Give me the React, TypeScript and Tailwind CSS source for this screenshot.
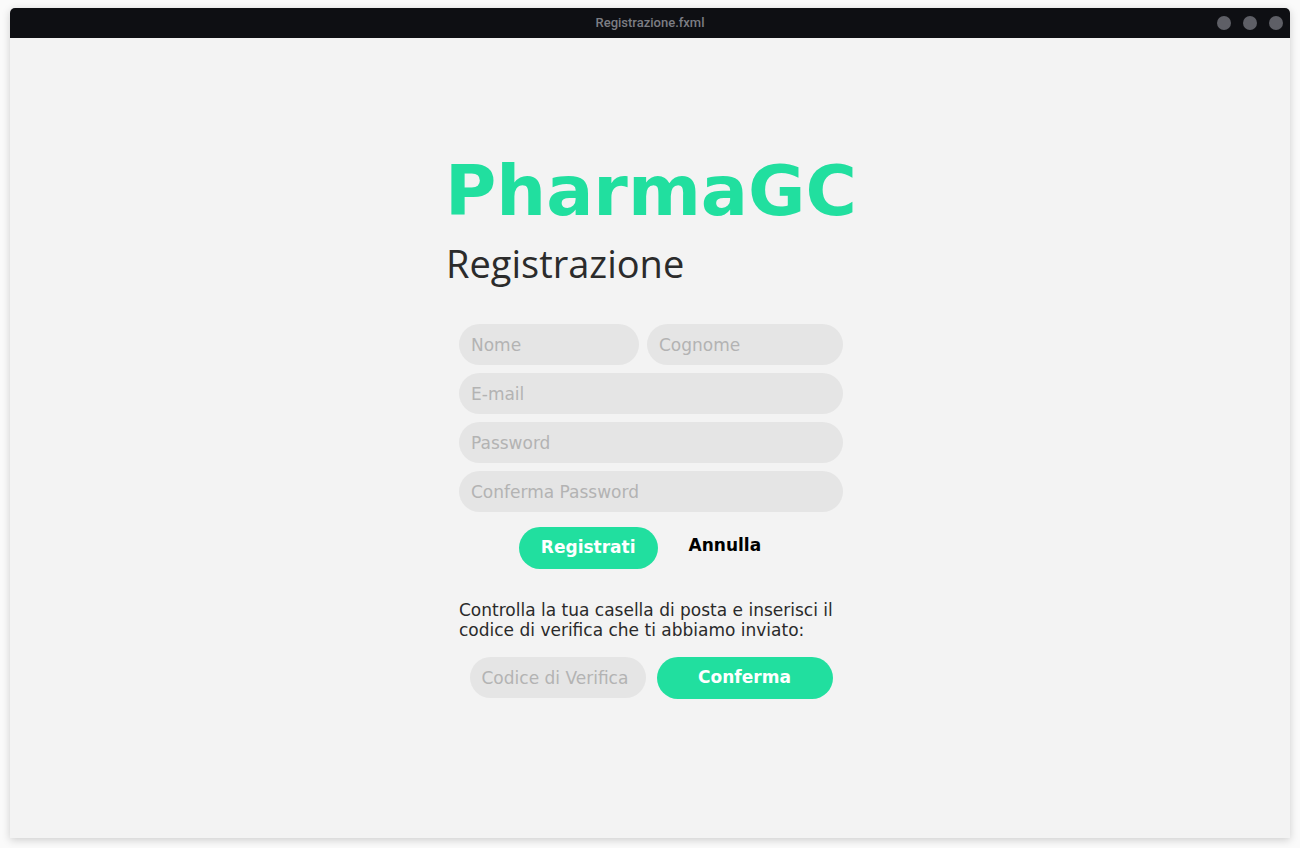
const inputCls =
  'h-[41px] rounded-full bg-[#e5e5e5] px-3 text-[17px] text-[#333] placeholder:text-[#b3b3b3] outline-none';

const App = () => {
  return (
    <div className="w-[1300px] h-[848px] bg-[#fafafa] pt-2 px-[10px]" style={{ fontFamily: "'DejaVu Sans', sans-serif" }}>
      <div className="w-[1280px] h-[830px] flex flex-col bg-[#f3f3f3] rounded-t-[5px] overflow-hidden shadow-[0_2px_8px_rgba(0,0,0,0.18)]">
        {/* title bar */}
        <div className="h-[30px] shrink-0 bg-[#0e0f13] flex items-center relative">
          <div className="flex-1 text-center text-[13px] font-medium text-[#7c7d83]" style={{ fontFamily: "'Roboto', sans-serif" }}>
            Registrazione.fxml
          </div>
          <div className="absolute right-[7px] top-[8px] flex gap-3">
            <span className="w-[14px] h-[14px] rounded-full bg-[#5e5f66]" />
            <span className="w-[14px] h-[14px] rounded-full bg-[#5e5f66]" />
            <span className="w-[14px] h-[14px] rounded-full bg-[#5e5f66]" />
          </div>
        </div>

        <div className="flex-1 flex justify-center pt-[113px]">
          <div className="w-[410px] flex flex-col">
            <h1 className="text-[70px] leading-[80px] font-bold text-[#21df9f]">PharmaGC</h1>
            <h2 className="mt-[10px] text-[38px] leading-[44px] text-[#2b2b2b] ml-[1px]" style={{ fontFamily: "'Open Sans', sans-serif" }}>
              Registrazione
            </h2>

            <form className="mt-[39px] ml-[14px] w-[384px] flex flex-col gap-2" onSubmit={(e) => e.preventDefault()}>
              <div className="flex gap-2">
                <input className={`${inputCls} w-[180px]`} placeholder="Nome" />
                <input className={`${inputCls} w-[196px]`} placeholder="Cognome" />
              </div>
              <input className={`${inputCls} w-full`} placeholder="E-mail" />
              <input className={`${inputCls} w-full`} type="password" placeholder="Password" />
              <input className={`${inputCls} w-full`} type="password" placeholder="Conferma Password" />

              <div className="flex justify-center gap-[9px] mt-[7px]">
                <button className="h-[42px] px-[22px] rounded-full bg-[#21df9f] text-white font-bold text-[17px]">
                  Registrati
                </button>
                <button className="h-[42px] px-[22px] rounded-full text-black font-bold text-[17px] -mt-[2px]">
                  Annulla
                </button>
              </div>

              <p className="mt-[23px] text-[17px] leading-[20px] text-[#2a2a2a]">
                Controlla la tua casella di posta e inserisci il codice di verifica che ti abbiamo inviato:
              </p>

              <div className="flex justify-center gap-[11px] mt-[9px]">
                <input className={`${inputCls} w-[176px]`} placeholder="Codice di Verifica" />
                <button className="w-[176px] h-[42px] rounded-full bg-[#21df9f] text-white font-bold text-[17px]">
                  Conferma
                </button>
              </div>
            </form>
          </div>
        </div>
      </div>
    </div>
  );
};

export default App;
